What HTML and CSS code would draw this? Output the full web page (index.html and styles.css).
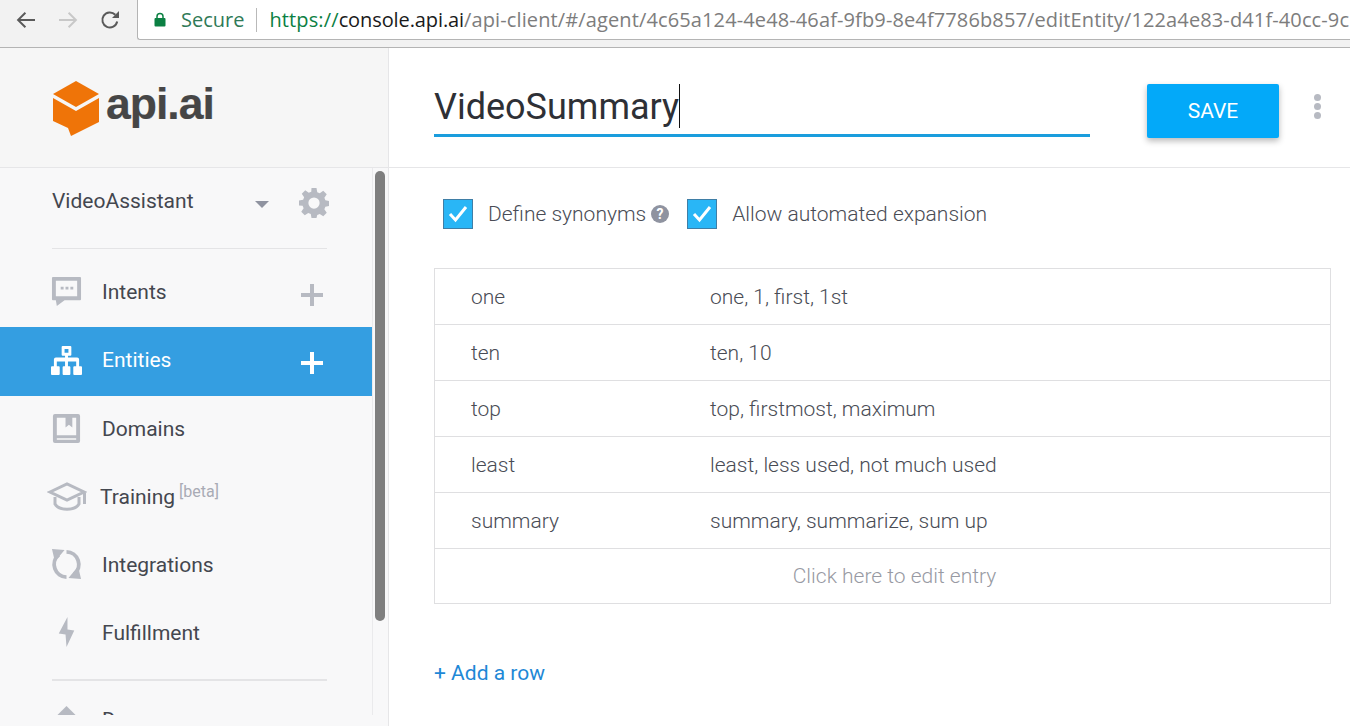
FILE: index.html
```html
<!DOCTYPE html>
<html>
<head>
  <title>VideoSummary - api.ai</title>
  <link rel="stylesheet" href="styles.css">
</head>
<body>
  <div class="browser-bar">
    <div class="browser-nav">
      <svg class="nav-icon" viewBox="0 0 24 24"><path d="M21 11H6.500l5.600-5.600L10.700 4 2.700 12l8 8 1.400-1.400L6.500 13H21z" fill="#5a5a5a"/></svg>
      <svg class="nav-icon" viewBox="0 0 24 24"><path d="M3 11h14.500l-5.600-5.600L13.300 4l8 8-8 8-1.400-1.400L17.500 13H3z" fill="#c8c8c8"/></svg>
      <svg class="nav-icon" viewBox="0 0 24 24"><path d="M19.200 13.500a7.500 7.500 0 1 1-1.900-6.700" fill="none" stroke="#5a5a5a" stroke-width="2"/><path d="M21 3v7h-7z" fill="#5a5a5a"/></svg>
    </div>
    <div class="address">
      <svg class="lock" viewBox="0 0 12 14"><path d="M3 6V4a3 3 0 0 1 6 0v2" fill="none" stroke="#0b8043" stroke-width="1.500"/><rect x="0.500" y="5.500" width="11" height="8.500" rx="1" fill="#0b8043"/></svg>
      <span class="secure">Secure</span>
      <span class="address-sep"></span>
      <span class="url"><span class="url-https">https://</span><span class="url-host">console.api.ai</span>/api-client/#/agent/4c65a124-4e48-46af-9fb9-8e4f7786b857/editEntity/122a4e83-d41f-40cc-9c</span>
    </div>
  </div>

  <div class="app">
    <aside class="sidebar">
      <div class="logo">
        <svg class="logo-mark" viewBox="0 0 46 56">
          <path d="M23 0 46 13 23 26 0 13z" fill="#ef7408"/>
          <path d="M0 17 23 30 46 17V41L18 55 15 47 0 40z" fill="#ef7408"/>
        </svg>
        <span class="logo-text">api.ai</span>
      </div>
      <div class="side-scroll">
        <div class="agent-row">
          <span class="agent-name">VideoAssistant</span>
          <span class="caret"></span>
          <svg class="gear" viewBox="0 0 24 24"><path fill="#b7bac2" fill-rule="evenodd" d="M10 0h4l.6 3.300 2 .8L19.400 2.200l2.800 2.800-1.900 2.800.8 2 3.300.6v4l-3.300.6-.8 2 1.900 2.800-2.800 2.800-2.800-1.900-2 .8L14 24h-4l-.6-3.300-2-.8-2.800 1.900-2.800-2.800 1.900-2.800-.8-2L0 14v-4l3.300-.6.800-2L2.200 4.600 5 1.800l2.800 1.900 2-.8zM12 7.500a4.500 4.500 0 1 0 0 9 4.500 4.500 0 0 0 0-9z"/></svg>
        </div>
        <div class="side-rule"></div>
        <nav class="menu">
          <a class="menu-item" href="#">
            <svg class="menu-icon" viewBox="0 0 32 32"><path fill="#b7bac2" fill-rule="evenodd" d="M2 1h28a1 1 0 0 1 1 1v22a1 1 0 0 1-1 1H14l-8 6-1-6H2a1 1 0 0 1-1-1V2a1 1 0 0 1 1-1zm3 4v16h22V5zm5 6h3v3h-3zm5 0h3v3h-3zm5 0h3v3h-3z"/></svg>
            <span class="menu-label">Intents</span>
            <span class="menu-plus"></span>
          </a>
          <a class="menu-item active" href="#">
            <svg class="menu-icon" viewBox="0 0 32 32"><path fill="#fff" fill-rule="evenodd" d="M12 1h8a1 1 0 0 1 1 1v8a1 1 0 0 1-1 1h-2.500v2H27a2 2 0 0 1 2 2v7h2a1 1 0 0 1 1 1v7a1 1 0 0 1-1 1h-7a1 1 0 0 1-1-1v-7a1 1 0 0 1 1-1h2v-5h-8.500v5H19a1 1 0 0 1 1 1v7a1 1 0 0 1-1 1h-6a1 1 0 0 1-1-1v-7a1 1 0 0 1 1-1h1.500v-5H6v5h2a1 1 0 0 1 1 1v7a1 1 0 0 1-1 1H1a1 1 0 0 1-1-1v-7a1 1 0 0 1 1-1h2v-7a2 2 0 0 1 2-2h9.500v-2H12a1 1 0 0 1-1-1V2a1 1 0 0 1 1-1zm2 3v4h4V4z"/></svg>
            <span class="menu-label">Entities</span>
            <span class="menu-plus"></span>
          </a>
          <a class="menu-item" href="#">
            <svg class="menu-icon" viewBox="0 0 32 32"><path fill="#b7bac2" fill-rule="evenodd" d="M4 1h24a2 2 0 0 1 2 2v26a2 2 0 0 1-2 2H4a2 2 0 0 1-2-2V3a2 2 0 0 1 2-2zm2 4v18h20V5h-4v10l-3.500-3-3.500 3V5zm0 21v1.500h20V26z"/></svg>
            <span class="menu-label">Domains</span>
          </a>
          <a class="menu-item training" href="#">
            <svg class="menu-icon wide" viewBox="0 0 40 30"><path fill="none" stroke="#b7bac2" stroke-width="3" d="M3 10 20 2l17 8-17 8z"/><path fill="none" stroke="#b7bac2" stroke-width="3" d="M8 15v7c4 7 20 7 24 0v-7"/><path fill="#b7bac2" d="M36 11h3v11h-3z"/></svg>
            <span class="menu-label">Training</span>
            <span class="beta">[beta]</span>
          </a>
          <a class="menu-item" href="#">
            <svg class="menu-icon" viewBox="0 0 32 32"><path fill="none" stroke="#b7bac2" stroke-width="4" d="M8 6A13 13 0 0 0 16 29M24 26A13 13 0 0 0 16 3"/><path fill="#b7bac2" d="M1 0 14 1 4 13zM31 31 18 30 28 18z"/></svg>
            <span class="menu-label">Integrations</span>
          </a>
          <a class="menu-item" href="#">
            <svg class="menu-icon" viewBox="0 0 32 32"><path fill="#b7bac2" d="M17 0 8 17l7 1 1 13 8-17-7-1z"/></svg>
            <span class="menu-label">Fulfillment</span>
          </a>
        </nav>
        <div class="side-rule lower"></div>
        <a class="menu-item docs" href="#">
          <svg class="menu-icon" viewBox="0 0 32 32"><path fill="#b7bac2" d="M16 2 28 14H4z"/></svg>
          <span class="menu-label">Docs</span>
        </a>
      </div>
      <div class="scroll-thumb"></div>
    </aside>

    <main class="content">
      <header class="entity-header">
        <div class="entity-name"><span class="entity-title">VideoSummary</span><span class="text-cursor"></span></div>
        <button class="save-btn">SAVE</button>
        <div class="more"><span></span><span></span><span></span></div>
      </header>

      <section class="entity-body">
        <div class="options">
          <label class="option">
            <svg class="check" viewBox="0 0 30 30"><rect x="0.500" y="0.500" width="29" height="29" fill="#29b6f6" stroke="#3f7ea6"/><path d="M7 15l5.500 6L23 8" fill="none" stroke="#fff" stroke-width="3"/></svg>
            <span>Define synonyms</span>
            <svg class="help" viewBox="0 0 18 18"><circle cx="9" cy="9" r="9" fill="#8f93a0"/><text x="9" y="13.500" class="help-mark">?</text></svg>
          </label>
          <label class="option second">
            <svg class="check" viewBox="0 0 30 30"><rect x="0.500" y="0.500" width="29" height="29" fill="#29b6f6" stroke="#3f7ea6"/><path d="M7 15l5.500 6L23 8" fill="none" stroke="#fff" stroke-width="3"/></svg>
            <span>Allow automated expansion</span>
          </label>
        </div>

        <div class="entries">
          <div class="entry"><span class="entry-key">one</span><span class="entry-syn">one, 1, first, 1st</span></div>
          <div class="entry"><span class="entry-key">ten</span><span class="entry-syn">ten, 10</span></div>
          <div class="entry"><span class="entry-key">top</span><span class="entry-syn">top, firstmost, maximum</span></div>
          <div class="entry"><span class="entry-key">least</span><span class="entry-syn">least, less used, not much used</span></div>
          <div class="entry"><span class="entry-key">summary</span><span class="entry-syn">summary, summarize, sum up</span></div>
          <div class="entry-new">Click here to edit entry</div>
        </div>

        <a class="add-row" href="#">+ Add a row</a>
      </section>
    </main>
  </div>
</body>
</html>
```

FILE: styles.css
```css
html, body {
  margin: 0;
  padding: 0;
  height: 100%;
  overflow: hidden;
}

body {
  font-family: Roboto, Arial, sans-serif;
  background-color: #fff;
  color: #3b3f48;
}

a {
  text-decoration: none;
}

/* browser chrome */
.browser-bar {
  display: flex;
  height: 47px;
  background-color: #f2f2f2;
  border-bottom: 1px solid #b4b4b4;
}

.browser-nav {
  display: flex;
  align-items: center;
  gap: 18px;
  width: 137px;
  padding: 0 0 8px 14px;
  box-sizing: border-box;
}

.nav-icon {
  width: 24px;
  height: 24px;
}

.address {
  flex: 1;
  display: flex;
  align-items: center;
  height: 39px;
  padding-left: 16px;
  background-color: #fff;
  border: 1px solid #b4b4b4;
  border-width: 0 0 1px 1px;
  border-bottom-left-radius: 3px;
  font-family: "Open Sans", Arial, sans-serif;
  font-size: 20px;
  white-space: nowrap;
  overflow: hidden;
}

.lock {
  width: 12px;
  height: 15px;
  margin-right: 15px;
}

.secure {
  color: #2f7a57;
}

.address-sep {
  width: 1px;
  height: 24px;
  margin: 0 12px;
  background-color: #b9b9b9;
}

.url {
  color: #7d7d7d;
  letter-spacing: 0.12px;
}

.url-https {
  color: #0b8043;
}

.url-host {
  color: #1a1a1a;
  letter-spacing: -0.1px;
}

.app {
  display: flex;
  height: 678px;
}

/* left column */
.sidebar {
  position: relative;
  flex: none;
  width: 388px;
  height: 678px;
  overflow: hidden;
  background-color: #f8f8f9;
  border-right: 1px solid #e6e6e8;
}

.logo {
  display: flex;
  align-items: center;
  height: 120px;
  padding-left: 53px;
  box-sizing: border-box;
  background-color: #f6f6f6;
  border-bottom: 1px solid #e6e6e8;
}

.logo-mark {
  width: 46px;
  height: 56px;
  margin: 2px 7px 0 0;
}

.logo-text {
  margin-bottom: 8px;
  font-family: "Liberation Sans", Arial, sans-serif;
  font-size: 44.500px;
  font-weight: 700;
  letter-spacing: -1px;
  color: #464646;
  -webkit-text-stroke: 0.2px #464646;
}

/* the scrolling part stops short of the window's bottom edge */
.side-scroll {
  width: 372px;
  height: 547px;
  overflow: hidden;
  border-right: 1px solid #eaeaec;
}

.agent-row {
  display: flex;
  align-items: center;
  height: 70px;
  padding-left: 52px;
  box-sizing: border-box;
}

.agent-name {
  width: 203px;
  margin-top: -5px;
  font-size: 21px;
  color: #44474f;
}

.caret {
  width: 0;
  height: 0;
  margin-right: 30px;
  margin-top: 3px;
  border-left: 7px solid transparent;
  border-right: 7px solid transparent;
  border-top: 7px solid #8f93a0;
}

.gear {
  width: 30px;
  height: 30px;
}

.side-rule {
  width: 275px;
  height: 1px;
  margin: 10px 0 0 52px;
  background-color: #e4e4e6;
}

.side-rule.lower {
  height: 2px;
  margin-top: 11px;
}

.menu {
  width: 372px;
  margin-top: 10px;
}

.menu-item {
  display: flex;
  align-items: center;
  width: 372px;
  height: 68px;
  padding: 0 0 3px 51px;
  box-sizing: border-box;
  font-size: 21px;
  color: #44474f;
}

.menu-item.active {
  height: 69px;
  background-color: #349ee1;
  color: #fff;
}

.menu-item.docs {
  margin-top: 6px;
}

.menu-icon {
  flex: none;
  width: 31px;
  height: 31px;
  margin-right: 20px;
}

.menu-icon.wide {
  width: 40px;
  height: 30px;
  margin-left: -4px;
  margin-right: 13px;
}

.menu-label {
  width: 199px;
}

.training .menu-label {
  width: auto;
}

.beta {
  margin: -10px 0 0 4px;
  font-size: 16px;
  color: #a9abb5;
}

.menu-plus {
  position: relative;
  width: 22px;
  height: 22px;
  margin-top: 6px;
}

.menu-plus::before,
.menu-plus::after {
  content: "";
  position: absolute;
  background-color: #b7bac2;
}

.menu-plus::before {
  left: 0;
  right: 0;
  top: 9px;
  height: 4px;
}

.menu-plus::after {
  top: 0;
  bottom: 0;
  left: 9px;
  width: 4px;
}

.active .menu-plus::before,
.active .menu-plus::after {
  background-color: #fff;
}

.scroll-thumb {
  position: absolute;
  left: 375px;
  top: 123px;
  width: 10px;
  height: 450px;
  border-radius: 5px;
  background-color: #7f7f7f;
}

/* right column */
.content {
  flex: 1;
  min-width: 0;
}

.entity-header {
  display: flex;
  height: 120px;
  box-sizing: border-box;
  padding: 36px 0 0 45px;
  border-bottom: 1px solid #e6e6e8;
}

.entity-name {
  display: flex;
  width: 656px;
  height: 53px;
  box-sizing: border-box;
  border-bottom: 3px solid #1a9ddd;
}

.entity-title {
  font-size: 36px;
  line-height: 46px;
  color: #2e3036;
}

.text-cursor {
  width: 1px;
  height: 44px;
  background-color: #111;
}

.save-btn {
  width: 132px;
  height: 54px;
  margin: 0 0 0 57px;
  border: 0;
  border-radius: 2px;
  background-color: #03a9f9;
  color: #fff;
  font-family: Roboto, Arial, sans-serif;
  font-size: 21px;
  box-shadow: 0 3px 6px rgba(0, 0, 0, 0.28);
}

.more {
  display: flex;
  flex-direction: column;
  gap: 2px;
  margin: 10px 0 0 35px;
}

.more span {
  width: 7px;
  height: 7px;
  border-radius: 50%;
  background-color: #b7bac2;
}

.entity-body {
  padding: 31px 19px 0 45px;
}

.options {
  display: flex;
  font-size: 21px;
  font-weight: 300;
  color: #494c55;
  padding-left: 9px;
}

.option {
  display: flex;
  align-items: center;
}

.option.second {
  margin-left: 18px;
}

.check {
  width: 30px;
  height: 30px;
  margin-right: 15px;
}

.help {
  width: 18px;
  height: 18px;
  margin-left: 5px;
}

.help-mark {
  font-size: 14px;
  font-weight: 700;
  fill: #fff;
  text-anchor: middle;
}

.entries {
  margin-top: 39px;
  border: 1px solid #dfdfe1;
  font-size: 21px;
  font-weight: 300;
  color: #494c55;
}

.entry {
  display: flex;
  align-items: center;
  height: 55px;
  border-bottom: 1px solid #dfdfe1;
}

.entry-key {
  width: 239px;
  padding-left: 36px;
}

.entry-new {
  height: 54px;
  padding-left: 24px;
  line-height: 54px;
  text-align: center;
  color: #989aa3;
}

.add-row {
  display: inline-block;
  margin-top: 57px;
  font-size: 21px;
  color: #1e88d6;
}
```
